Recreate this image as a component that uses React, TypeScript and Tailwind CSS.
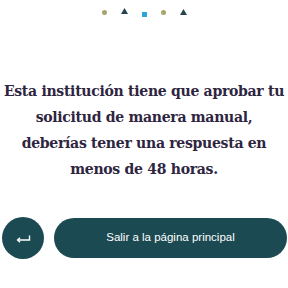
export default function App() {
  return (
    <div className="w-[288px] h-[288px] bg-white overflow-hidden flex flex-col items-center">
      {/* loader dots */}
      <div className="h-[24px] flex items-center gap-[14px] pt-[1px]">
        <span className="w-[5px] h-[5px] rounded-full bg-[#a6a56a]" />
        <svg width="7" height="6" viewBox="0 0 7 6" className="-mt-[3px]">
          <polygon points="3.5,0 7,6 0,6" fill="#24454c" />
        </svg>
        <span className="w-[5px] h-[5px] bg-[#2fa3dc] mt-[3px]" />
        <span className="w-[5px] h-[5px] rounded-full bg-[#a6a56a]" />
        <svg width="7" height="6" viewBox="0 0 7 6" className="-mt-[1px]">
          <polygon points="3.5,0 7,6 0,6" fill="#24454c" />
        </svg>
      </div>

      <p className="mt-[54px] w-[288px] text-center whitespace-nowrap font-['DejaVu_Serif_Condensed','DejaVu_Serif',serif] font-bold text-[15.6px] leading-[26px] tracking-[-0.3px] text-[#2e2540]">
        Esta institución tiene que aprobar tu
        <br />
        solicitud de manera manual,
        <br />
        deberías tener una respuesta en
        <br />
        menos de 48 horas.
      </p>

      <div className="mt-[35px] w-full flex items-center gap-[10px] pl-[2px] pr-[1px]">
        <button className="w-[42px] h-[42px] rounded-full bg-[#1b4a52] flex items-center justify-center shrink-0">
          <svg width="15" height="8" viewBox="0 0 15 8" fill="none" className="mt-[1px]">
            <path d="M13.5 0.5 V5 H1.5" stroke="white" strokeWidth="1.4" />
            <path d="M4 2.7 L1.6 5 L4 7.3" stroke="white" strokeWidth="1.4" fill="none" />
          </svg>
        </button>
        <button className="flex-1 h-[40px] rounded-full bg-[#1b4a52] text-white text-[11.5px] font-['Liberation_Sans',Arial,sans-serif]">
          Salir a la página principal
        </button>
      </div>
    </div>
  );
}
